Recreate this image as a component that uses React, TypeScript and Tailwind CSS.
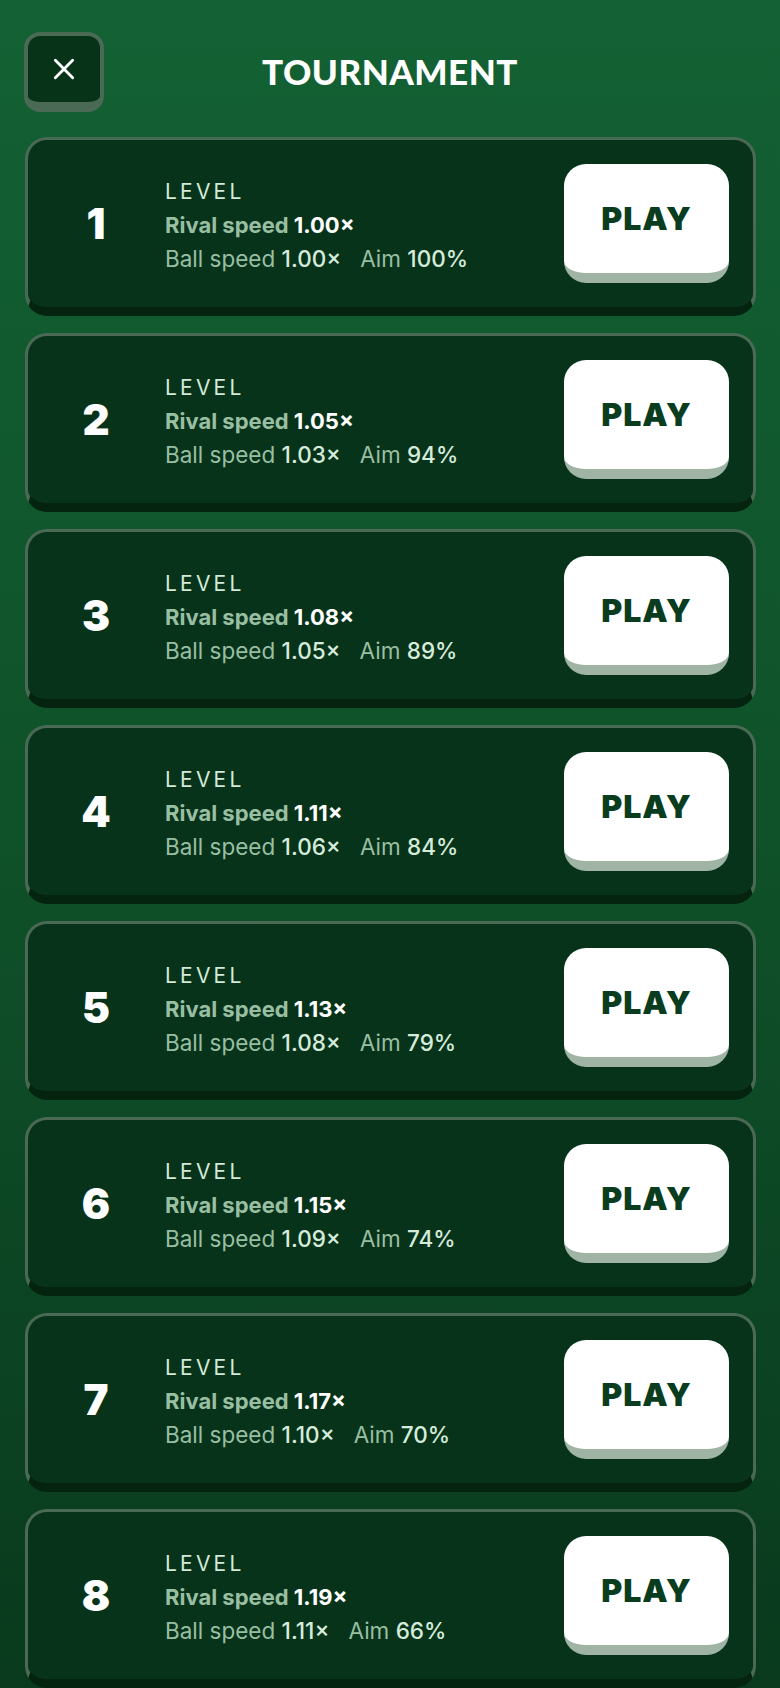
import React from 'react';

type Level = { n: number; rival: string; ball: string; aim: number };

const LEVELS: Level[] = [
  { n: 1, rival: '1.00', ball: '1.00', aim: 100 },
  { n: 2, rival: '1.05', ball: '1.03', aim: 94 },
  { n: 3, rival: '1.08', ball: '1.05', aim: 89 },
  { n: 4, rival: '1.11', ball: '1.06', aim: 84 },
  { n: 5, rival: '1.13', ball: '1.08', aim: 79 },
  { n: 6, rival: '1.15', ball: '1.09', aim: 74 },
  { n: 7, rival: '1.17', ball: '1.10', aim: 70 },
  { n: 8, rival: '1.19', ball: '1.11', aim: 66 },
];

const INTER = { fontFamily: 'Inter, "Noto Sans", sans-serif' };

const LevelCard: React.FC<{ level: Level }> = ({ level }) => {
  return (
    <div className="h-[179px] rounded-[22px] border-[3px] border-[#4b6a56] border-b-[9px] border-b-[#05240f] bg-[#08331b] flex items-center">
      <div className="w-[96px] ml-[20px] text-center text-[42px] leading-none font-black text-white">
        {level.n}
      </div>
      <div className="ml-[21px] flex-1 flex flex-col pt-[2px]">
        <div className="text-[21px] leading-[34px] tracking-[3.2px] text-[#d3ead8]">LEVEL</div>
        <div className="text-[22px] leading-[33px] font-bold text-[#98bfa2]">
          Rival speed <span className="text-white">{level.rival}×</span>
        </div>
        <div className="text-[22.5px] leading-[33px] text-[#98bfa2]">
          Ball speed <span className="font-medium text-[#d5ecdb]">{level.ball}×</span>
          <span className="ml-[19px]">Aim</span>{' '}
          <span className="font-medium text-[#d5ecdb]">{level.aim}%</span>
        </div>
      </div>
      <button className="mr-[24px] w-[165px] h-[119px] rounded-[22px] bg-white border-b-[10px] border-b-[#9fb4a5] flex items-center justify-center text-[32px] font-black tracking-[1px] text-[#0a3d20]">
        PLAY
      </button>
    </div>
  );
};

export default function App() {
  return (
    <div
      className="min-h-[1688px] w-full bg-gradient-to-b from-[#136134] via-[#0f5129] to-[#093a1d] px-[24px] pt-[32px]"
      style={INTER}
    >
      <div className="relative flex items-center justify-center h-[80px]">
        <button className="absolute left-0 top-0 w-[80px] h-[80px] rounded-[16px] border-[4px] border-[#4b6a56] border-b-[10px] bg-[#073319] flex items-center justify-center">
          <svg width="26" height="26" viewBox="0 0 24 24" fill="none" stroke="white" strokeWidth="2.6" strokeLinecap="round">
            <path d="M4 4L20 20M20 4L4 20" />
          </svg>
        </button>
        <h1
          className="text-[35px] font-black text-white tracking-[0.5px] leading-none -mt-[2px]"
          style={{ fontFamily: 'Lato, "Noto Sans", sans-serif' }}
        >
          TOURNAMENT
        </h1>
      </div>
      <div className="mt-[25px] flex flex-col gap-[17px] ml-[1px]">
        {LEVELS.map((l) => (
          <LevelCard key={l.n} level={l} />
        ))}
      </div>
    </div>
  );
}
